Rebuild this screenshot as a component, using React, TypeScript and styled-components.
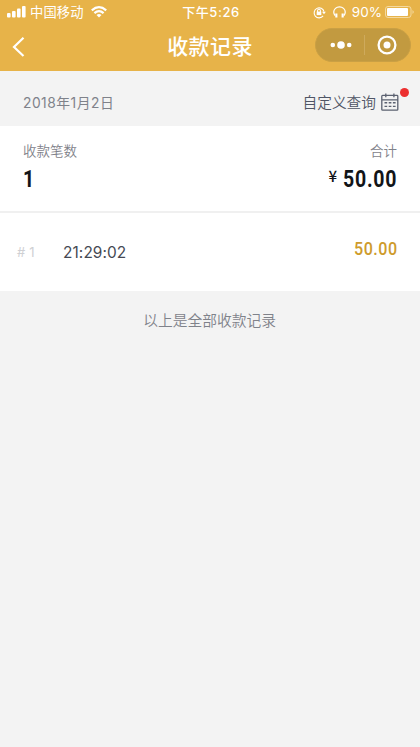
import React from "react";
import styled, { createGlobalStyle } from "styled-components";

const Global = createGlobalStyle`
  * { box-sizing: border-box; }
  body { margin: 0; background: #f3f3f3; }
`;

const Page = styled.main`
  width: 420px;
  height: 747px;
  overflow: hidden;
  background: #f3f3f3;
  font-family: Inter, "Noto Sans CJK SC", sans-serif;
  color: #7f828a;
`;

const Header = styled.header`
  height: 71px;
  background: #e7b349;
  color: #fff;
`;

const StatusBar = styled.div`
  height: 24px;
  padding: 0 5px 0 7px;
  display: grid;
  grid-template-columns: 1fr auto 1fr;
  align-items: center;
  line-height: 24px;
`;

const StatusGroup = styled.div<{ $end?: boolean }>`
  display: flex;
  align-items: center;
  height: 24px;
  justify-content: ${(p) => (p.$end ? "flex-end" : "flex-start")};
`;

const StatusIcons = styled.div`
  display: flex;
  align-items: center;
  gap: 7px;
`;

const Carrier = styled.span`
  font-size: 13.3px;
  margin: 0 7px 0 4px;
  letter-spacing: 0.1px;
`;

const Clock = styled.span`
  font-size: 13px;
  font-weight: 500;
  letter-spacing: 0.55px;
`;

const Battery = styled.span`
  font-size: 13.5px;
  margin: 0 3px 0 6px;
`;

const NavBar = styled.div`
  height: 47px;
  padding: 0 9px 0 11px;
  display: grid;
  grid-template-columns: 1fr auto 1fr;
  align-items: start;
`;

const BackIcon = styled.svg`
  display: block;
  margin-top: 12px;
`;

const Title = styled.h1`
  margin: 6px 2px 0 0;
  font-size: 21px;
  line-height: 33px;
  font-weight: 500;
  letter-spacing: 0.4px;
`;

const Capsule = styled.div`
  justify-self: end;
  width: 96px;
  height: 34px;
  margin-top: 4px;
  border-radius: 17px;
  background: #c29a40;
  border: 1px solid #caa044;
  display: flex;
  align-items: center;
`;

const CapsuleButton = styled.button`
  flex: 1;
  height: 20px;
  padding: 0 0 0 2px;
  border: 0;
  background: none;
  display: flex;
  align-items: center;
  justify-content: center;
  & + & { border-left: 1px solid #ceaa5c; padding-left: 0; }
`;

const DateBar = styled.section`
  height: 55px;
  padding: 7px 11px 0 23px;
  display: flex;
  justify-content: space-between;
  align-items: flex-start;
`;

const DateText = styled.span`
  font-size: 13.8px;
  line-height: 50px;
  letter-spacing: 0.5px;
`;

const Query = styled.button`
  position: relative;
  height: 48px;
  padding: 0 10px 0 0;
  border: 0;
  background: none;
  display: flex;
  align-items: center;
  gap: 5px;
  font: 350 14.7px/48px "Noto Sans CJK SC", sans-serif;
  color: #4f5565;
`;

const Badge = styled.i`
  position: absolute;
  right: 0;
  top: 10px;
  width: 9px;
  height: 9px;
  border-radius: 50%;
  background: #ec2f2f;
`;

const Summary = styled.section`
  height: 87px;
  padding: 15px 23px 0;
  background: #fff;
  border-bottom: 2px solid #f0f0f0;
  display: flex;
  justify-content: space-between;
`;

const Metric = styled.div<{ $end?: boolean }>`
  display: flex;
  flex-direction: column;
  align-items: ${(p) => (p.$end ? "flex-end" : "flex-start")};
`;

const Label = styled.span`
  font-size: 13.5px;
  font-weight: 350;
  line-height: 20px;
`;

const Value = styled.div`
  display: flex;
  height: 36px;
  color: #121418;
`;

const Currency = styled.span`
  font: 500 15px/30px "Noto Sans CJK SC", sans-serif;
  margin-right: 6px;
`;

const Amount = styled.strong<{ $width: number }>`
  width: ${(p) => p.$width}px;
  font: 700 23.5px/37px Roboto, sans-serif;
  letter-spacing: 0.9px;
  transform: scaleX(0.83);
  transform-origin: left;
`;

const Row = styled.section`
  height: 78px;
  padding: 0 23px 0 17px;
  background: #fff;
  display: flex;
  align-items: center;
`;

const Index = styled.span`
  width: 46px;
  font-size: 13px;
  letter-spacing: 0.2px;
  color: #cfd0d3;
`;

const Time = styled.span`
  flex: 1;
  font-size: 15.4px;
  letter-spacing: 0.1px;
  color: #454953;
`;

const RowAmount = styled.span`
  width: 43px;
  margin-bottom: 6px;
  font: 500 18.5px/24px Roboto, sans-serif;
  letter-spacing: 0.6px;
  color: #ce9b2c;
  transform: scaleX(0.87);
  transform-origin: left;
`;

const Footer = styled.p`
  margin: 18px 1px 0 0;
  text-align: center;
  font-size: 14.75px;
  font-weight: 350;
  line-height: 25px;
`;

const SignalIcon = () => (
  <svg width="19" height="12" viewBox="0 0 19 12" fill="#fff">
    <rect x="0" y="7" width="3.6" height="4.5" rx="1" />
    <rect x="5" y="5" width="3.6" height="6.5" rx="1" />
    <rect x="10" y="2.5" width="3.6" height="9" rx="1" />
    <rect x="15" y="0" width="3.6" height="11.5" rx="1" />
  </svg>
);

const WifiIcon = () => (
  <svg width="16" height="12" viewBox="0 0 16 12" fill="none" stroke="#fff" strokeWidth="2.2">
    <path d="M.8 4.3Q8-2 15.2 4.3M3.4 7.1Q8 3 12.6 7.1" />
    <path d="M5.5 9Q8 7 10.5 9L8 11.5Z" fill="#fff" stroke="none" />
  </svg>
);

const LockIcon = () => (
  <svg width="13" height="13" viewBox="0 0 13 13" fill="none" stroke="#fff" strokeWidth="1.1">
    <path d="M10.1 9.9A5 5 0 1 1 11 5.7" />
    <path d="M9 5.7H12.9L11 8.2Z" fill="#fff" stroke="none" />
    <rect x="3.7" y="5.6" width="4.6" height="3.5" fill="#fff" stroke="none" />
    <path d="M4.6 6V4.6Q4.6 3.2 6 3.2T7.4 4.6V6" />
  </svg>
);

const HeadphonesIcon = () => (
  <svg width="13" height="13" viewBox="0 0 14 13" fill="none" stroke="#fff" strokeWidth="1.3">
    <path d="M2.2 9.8Q.8 8 .8 6A6.1 5.5 0 0 1 13.2 6Q13.2 8 11.8 9.8" />
    <path d="M3.6 7.6V12M10.4 7.6V12" strokeWidth="2.3" />
  </svg>
);

const BatteryIcon = () => (
  <svg width="30" height="12" viewBox="0 0 30 12">
    <rect x=".5" y=".5" width="25.5" height="11" rx="2.5" fill="none" stroke="#f4d99f" />
    <rect x="2" y="2" width="21" height="8" rx="1" fill="#fff" />
    <path d="M27.5 4Q30 6 27.5 8Z" fill="#f4d99f" />
  </svg>
);

const CalendarIcon = () => (
  <svg width="18" height="18" viewBox="0 0 18 18" fill="none" stroke="#5b6170" strokeWidth="1.3">
    <rect x=".8" y="2.4" width="16" height="14.8" rx=".8" />
    <path d="M1 6.8H17M4.8.4V4.2M12.9.4V4.2" />
    <path d="M3.5 9.8H6.2M7.7 9.8H10.4M11.9 9.8H14.6M3.5 13.4H6.2M7.7 13.4H10.4M11.9 13.4H14.6" strokeWidth="1.4" />
  </svg>
);

export default function App() {
  return (
    <Page>
      <Global />
      <Header>
        <StatusBar>
          <StatusGroup>
            <SignalIcon />
            <Carrier>中国移动</Carrier>
            <WifiIcon />
          </StatusGroup>
          <Clock>下午5:26</Clock>
          <StatusGroup $end>
            <StatusIcons>
              <LockIcon />
              <HeadphonesIcon />
            </StatusIcons>
            <Battery>90%</Battery>
            <BatteryIcon />
          </StatusGroup>
        </StatusBar>
        <NavBar>
          <BackIcon width="15" height="22" viewBox="0 0 15 22" fill="none" stroke="#fff" strokeWidth="2.2">
            <path d="M12.5 1.7L3 11L12.5 20" />
          </BackIcon>
          <Title>收款记录</Title>
          <Capsule>
            <CapsuleButton aria-label="更多">
              <svg width="22" height="8" viewBox="0 0 22 8" fill="#fff">
                <circle cx="2.8" cy="4" r="2.3" />
                <circle cx="11" cy="4" r="3.8" />
                <circle cx="19.2" cy="4" r="2.3" />
              </svg>
            </CapsuleButton>
            <CapsuleButton aria-label="关闭">
              <svg width="20" height="20" viewBox="0 0 20 20">
                <circle cx="10" cy="10" r="8.4" fill="none" stroke="#fff" strokeWidth="2.3" />
                <circle cx="10" cy="10" r="3.5" fill="#fff" />
              </svg>
            </CapsuleButton>
          </Capsule>
        </NavBar>
      </Header>
      <DateBar>
        <DateText>2018年1月2日</DateText>
        <Query>
          自定义查询
          <CalendarIcon />
          <Badge />
        </Query>
      </DateBar>
      <Summary>
        <Metric>
          <Label>收款笔数</Label>
          <Value>
            <Amount $width={12}>1</Amount>
          </Value>
        </Metric>
        <Metric $end>
          <Label>合计</Label>
          <Value>
            <Currency>¥</Currency>
            <Amount $width={54}>50.00</Amount>
          </Value>
        </Metric>
      </Summary>
      <Row>
        <Index># 1</Index>
        <Time>21:29:02</Time>
        <RowAmount>50.00</RowAmount>
      </Row>
      <Footer>以上是全部收款记录</Footer>
    </Page>
  );
}
